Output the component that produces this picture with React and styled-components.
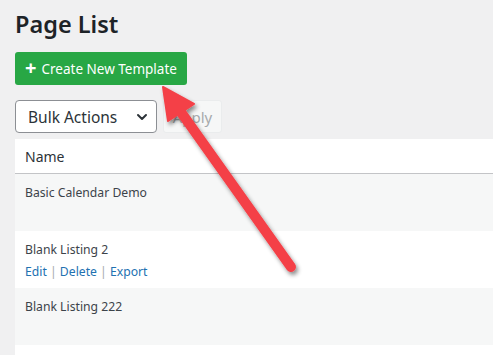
import React from 'react'
import styled, { createGlobalStyle } from 'styled-components'

const GlobalStyle = createGlobalStyle`
  html, body {
    margin: 0;
    padding: 0;
    background: #f0f0f1;
    overflow: hidden;
  }
  body {
    font-family: "Noto Sans", "Open Sans", sans-serif;
    color: #3c434a;
  }
`

const Page = styled.div`
  position: relative;
  width: 493px;
  height: 355px;
  padding-left: 15px;
  box-sizing: border-box;
  overflow: hidden;
`

const Title = styled.h1`
  margin: 0;
  padding-top: 8px;
  font-size: 23.5px;
  line-height: 33px;
  font-weight: 600;
  color: #1d2327;
`

const CreateButton = styled.button`
  margin-top: 11px;
  height: 33px;
  width: 172px;
  display: flex;
  align-items: center;
  justify-content: center;
  gap: 5px;
  border: none;
  border-radius: 3px;
  background: #28a745;
  color: #fff;
  font-family: inherit;
  font-size: 13.5px;
  padding: 0;
`

const Plus = styled.span`
  font-size: 20px;
  font-weight: 700;
  line-height: 1;
  margin-top: -2px;
`

const Toolbar = styled.div`
  margin-top: 15px;
  display: flex;
  gap: 6px;
  height: 33px;
`

const Select = styled.div`
  width: 142px;
  box-sizing: border-box;
  border: 1px solid #8c8f94;
  border-radius: 4px;
  background: #fff;
  display: flex;
  align-items: center;
  justify-content: space-between;
  padding: 0 8px 0 12px;
  font-size: 15.5px;
  color: #2c3338;
`

const ApplyButton = styled.div`
  width: 59px;
  box-sizing: border-box;
  border-radius: 3px;
  background: #f6f7f7;
  border: 1px solid #eaeced;
  color: #a7aaad;
  font-size: 15px;
  display: flex;
  align-items: center;
  justify-content: center;
`

const Table = styled.div`
  margin-top: 6px;
  width: 520px;
  background: #fff;
`

const HeadRow = styled.div`
  height: 35px;
  box-sizing: border-box;
  border-bottom: 1px solid #c3c4c7;
  display: flex;
  align-items: center;
  padding-left: 10px;
  font-size: 14px;
  color: #2c3338;
`

const Row = styled.div`
  height: 57px;
  box-sizing: border-box;
  padding: 9px 10px 0;
  background: ${p => (p.$alt ? '#f6f7f7' : '#fff')};
  font-size: 12.2px;
  line-height: 20px;
`

const Actions = styled.div`
  margin-top: 2px;
  color: #2271b1;
  span {
    color: #a7aaad;
  }
`

const Arrow = styled.svg`
  position: absolute;
  left: 0;
  top: 0;
  pointer-events: none;
`

const Chevron = () => (
  <svg width="12" height="12" viewBox="0 0 12 12">
    <path d="M2 4l4 4 4-4" fill="none" stroke="#2c3338" strokeWidth="2" strokeLinecap="round" strokeLinejoin="round" />
  </svg>
)

const App = () => (
  <>
    <GlobalStyle />
    <Page>
      <Title>Page List</Title>
      <CreateButton>
        <Plus>+</Plus>
        Create New Template
      </CreateButton>
      <Toolbar>
        <Select>
          Bulk Actions
          <Chevron />
        </Select>
        <ApplyButton>Apply</ApplyButton>
      </Toolbar>
      <Table>
        <HeadRow>Name</HeadRow>
        <Row $alt>Basic Calendar Demo</Row>
        <Row>
          Blank Listing 2
          <Actions>
            Edit <span>|</span> Delete <span>|</span> Export
          </Actions>
        </Row>
        <Row $alt>Blank Listing 222</Row>
        <Row />
      </Table>
      <Arrow width="493" height="355" viewBox="0 0 493 355">
        <defs>
          <filter id="sh" x="-20%" y="-20%" width="140%" height="140%">
            <feDropShadow dx="2" dy="3" stdDeviation="2" floodColor="#000" floodOpacity="0.45" />
          </filter>
        </defs>
        <g filter="url(#sh)" fill="#f44047" stroke="#f44047">
          <line x1="178" y1="108" x2="291" y2="267" strokeWidth="10" strokeLinecap="round" />
          <polygon points="163,87 194,104 168,121" strokeWidth="2" strokeLinejoin="round" />
        </g>
      </Arrow>
    </Page>
  </>
)

export default App
